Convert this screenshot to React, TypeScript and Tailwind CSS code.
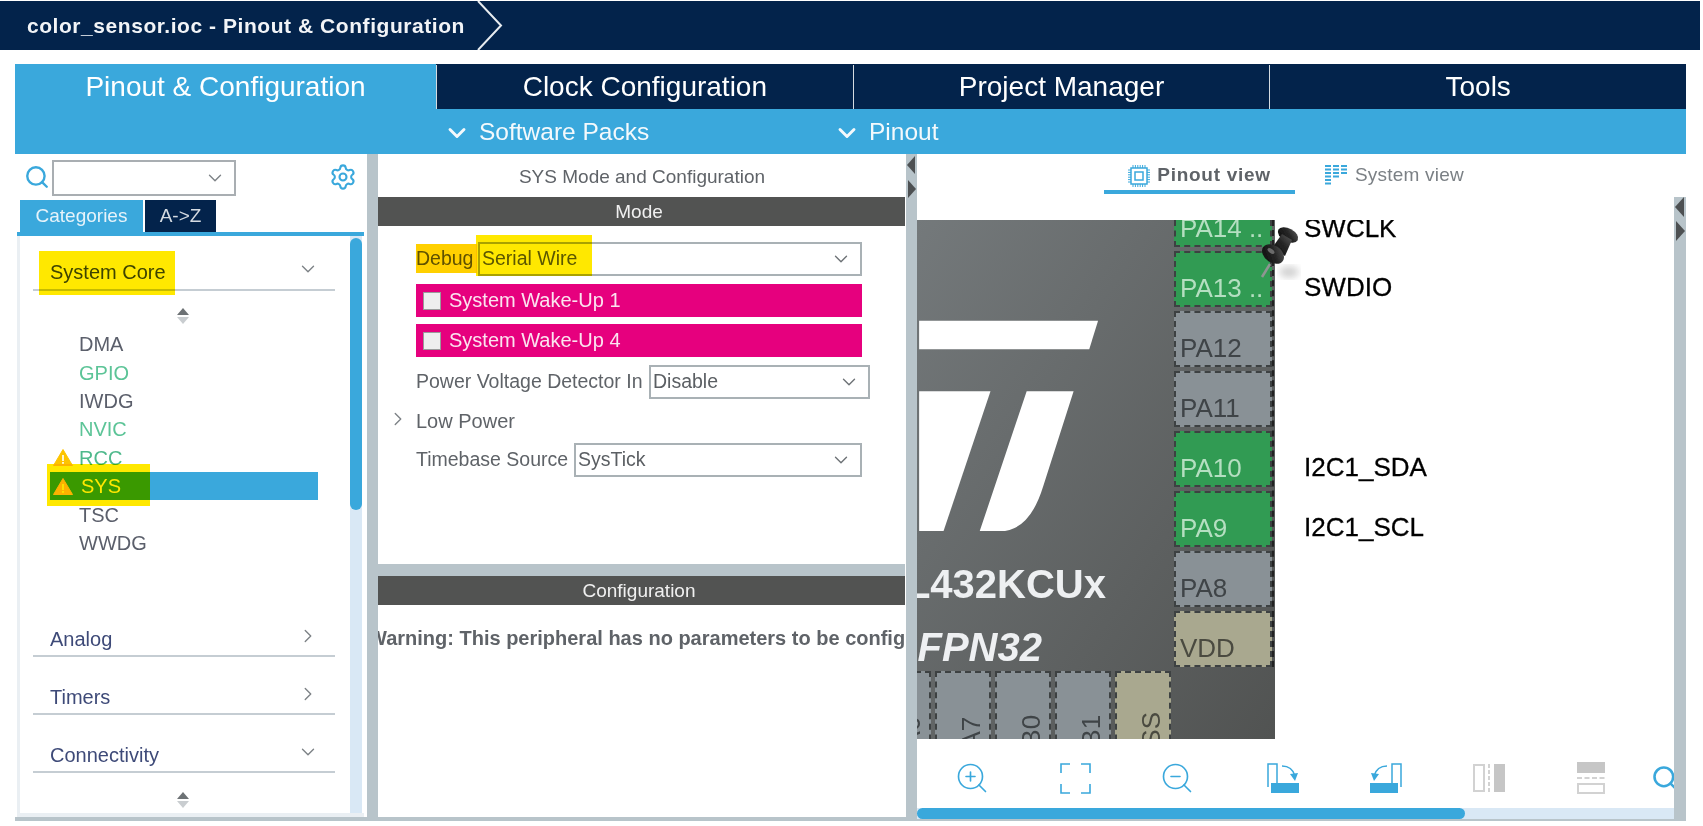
import React from 'react';
import { ChevronDown, ChevronRight, Search, Settings, ZoomIn, ZoomOut } from 'lucide-react';

const TABS = ['Clock Configuration', 'Project Manager', 'Tools'];

const ITEMS = [
  { name: 'DMA', color: 'text-[#5b5f6b]' },
  { name: 'GPIO', color: 'text-[#5cc497]' },
  { name: 'IWDG', color: 'text-[#5b5f6b]' },
  { name: 'NVIC', color: 'text-[#5cc497]' },
  { name: 'RCC', color: 'text-[#4fb98c]', warn: true },
  { name: 'SYS', color: 'text-white ml-[2px]', warn: true, selected: true },
  { name: 'TSC', color: 'text-[#5b5f6b]' },
  { name: 'WWDG', color: 'text-[#5b5f6b]' },
];

const SIDE_PINS = [
  { name: 'PA14 ..', kind: 'green', h: 'h-[27px]' },
  { name: 'PA13 ..', kind: 'green', h: 'h-[56px]' },
  { name: 'PA12', kind: 'gray', h: 'h-[56px]' },
  { name: 'PA11', kind: 'gray', h: 'h-[56px]' },
  { name: 'PA10', kind: 'green', h: 'h-[56px]' },
  { name: 'PA9', kind: 'green', h: 'h-[56px]' },
  { name: 'PA8', kind: 'gray', h: 'h-[56px]' },
  { name: 'VDD', kind: 'power', h: 'h-[56px]' },
];

const pinColors: Record<string, string> = {
  green: 'bg-[#319b53] text-[#b5dfc1]',
  gray: 'bg-[#899196] text-[#3f4447]',
  power: 'bg-[#a9a88f] text-[#4a4a40]',
};

const Stepper = () => (
  <svg width="14" height="18" viewBox="0 0 14 18" className="block">
    <path d="M7 1 L13 8 H1 Z" fill="#6d7275" />
    <path d="M7 17 L13 10 H1 Z" fill="#c9cdd0" />
  </svg>
);

const Warn = () => (
  <svg width="20" height="17" viewBox="0 0 20 17" className="block">
    <path d="M10 0.5 L19.5 16.5 H0.5 Z" fill="#fdc400" stroke="#fdc400" strokeLinejoin="round" />
    <rect x="9.2" y="6" width="1.6" height="6" fill="#fff" />
    <rect x="9.2" y="13" width="1.6" height="1.8" fill="#fff" />
  </svg>
);

const Section = ({ name, open, className }: { name: string; open?: boolean; className: string }) => (
  <div className={`flex items-center justify-between h-[32px] ml-[13px] w-[302px] border-b-2 border-[#c5cdd3] pl-[17px] pr-[18px] ${className}`}>
    <span className="text-[20px] text-[#3e4a78] leading-none">{name}</span>
    {open ? (
      <ChevronDown size={22} strokeWidth={1.5} className="text-[#7d8286] -mr-[2px] mb-[6px]" />
    ) : (
      <ChevronRight size={22} strokeWidth={1.5} className="text-[#7d8286] -mr-[2px] mb-[6px]" />
    )}
  </div>
);

const SelectBox = ({ value, className }: { value: string; className: string }) => (
  <div className={`flex items-center justify-between h-[34px] border-2 border-[#a9b1b5] pl-[2px] pr-[8px] bg-white ${className}`}>
    <span className="text-[19.5px] text-[#5b5f63]">{value}</span>
    <ChevronDown size={22} strokeWidth={1.5} className="text-[#6d7276]" />
  </div>
);

const WakeUp = ({ label }: { label: string }) => (
  <div className="flex items-center h-[33px] w-[446px] ml-[38px] bg-[#e6007e] pl-[7px] gap-[8px]">
    <div className="w-[18px] h-[18px] bg-[#eeeeee] border border-[#9a9a9a]" />
    <span className="text-[20px] text-[#fbe3f0] pb-[2px]">{label}</span>
  </div>
);

const DarkHeader = ({ label }: { label: string }) => (
  <div className="flex items-center justify-center h-[29px] bg-[#525352] text-[19px] text-[#f0f0f0] w-[527px] shrink-0 pr-[5px] pt-[2px]">{label}</div>
);

const ChipIcon = () => (
  <svg width="22" height="22" viewBox="0 0 22 22" className="block" fill="none" stroke="#3aa8dc">
    <rect x="3" y="3" width="16" height="16" strokeWidth="1.5" />
    <rect x="7" y="7" width="8" height="8" strokeWidth="1.5" />
    <path d="M5 0v3M7.4 0v3M9.8 0v3M12.2 0v3M14.6 0v3M17 0v3M5 19v3M7.4 19v3M9.8 19v3M12.2 19v3M14.6 19v3M17 19v3M0 5h3M0 7.4h3M0 9.8h3M0 12.2h3M0 14.6h3M0 17h3M19 5h3M19 7.4h3M19 9.8h3M19 12.2h3M19 14.6h3M19 17h3" strokeWidth="1" />
  </svg>
);

const SystemIcon = () => (
  <svg width="22" height="21" viewBox="0 0 22 21" className="block" fill="#3aa8dc">
    <rect x="0" y="0" width="6" height="2" /><rect x="8" y="0" width="6" height="2" /><rect x="16" y="0" width="6" height="2" />
    <rect x="0" y="3.5" width="6" height="2" /><rect x="8" y="3.5" width="6" height="2" /><rect x="16" y="3.5" width="6" height="2" />
    <rect x="0" y="7" width="6" height="2" /><rect x="8" y="7" width="6" height="2" /><rect x="16" y="7" width="6" height="2" />
    <rect x="0" y="10.5" width="6" height="2" /><rect x="8" y="10.5" width="6" height="2" />
    <rect x="0" y="14" width="6" height="2" />
    <rect x="0" y="17.5" width="6" height="2" />
  </svg>
);

const Toolbar = () => (
  <div className="flex items-center h-[32px] overflow-hidden w-[757px] shrink-0">
    <ZoomIn size={36} strokeWidth={1.1} className="text-[#3aa8dc] ml-[37px] shrink-0" />
    <svg width="31" height="31" viewBox="0 0 31 31" fill="none" stroke="#3aa8dc" strokeWidth="1.6" className="ml-[70px] shrink-0">
      <path d="M1 10V1h9M21 1h9v9M30 21v9h-9M10 30H1v-9" />
    </svg>
    <ZoomOut size={36} strokeWidth={1.1} className="text-[#3aa8dc] ml-[68px] shrink-0" />
    <svg width="32" height="31" viewBox="0 0 32 31" fill="none" className="ml-[72px] shrink-0">
      <path d="M1 24V1h9v19" stroke="#3aa8dc" strokeWidth="1.5" />
      <rect x="4" y="20" width="28" height="10" fill="#3aa8dc" />
      <path d="M15 3c6 0 11 3 13 10" stroke="#3aa8dc" strokeWidth="1.5" />
      <path d="M23 11l8-1-3 8z" fill="#3aa8dc" />
    </svg>
    <svg width="32" height="31" viewBox="0 0 32 31" fill="none" className="ml-[71px] shrink-0">
      <path d="M31 24V1h-9v19" stroke="#3aa8dc" strokeWidth="1.5" />
      <rect x="0" y="20" width="28" height="10" fill="#3aa8dc" />
      <path d="M17 3C11 3 6 6 4 13" stroke="#3aa8dc" strokeWidth="1.5" />
      <path d="M9 11l-8-1 3 8z" fill="#3aa8dc" />
    </svg>
    <svg width="32" height="28" viewBox="0 0 32 28" fill="none" className="ml-[71px] shrink-0">
      <rect x="1" y="1" width="10" height="26" stroke="#d2d2d2" strokeWidth="2" />
      <path d="M16 0v28" stroke="#d2d2d2" strokeWidth="2" strokeDasharray="4 2" />
      <rect x="21" y="0" width="11" height="28" fill="#c6c6c6" />
    </svg>
    <svg width="28" height="32" viewBox="0 0 28 32" fill="none" className="ml-[72px] shrink-0">
      <rect x="0" y="0" width="28" height="11" fill="#c6c6c6" />
      <path d="M0 16h28" stroke="#d2d2d2" strokeWidth="2" strokeDasharray="5 2.5" />
      <rect x="1" y="22" width="26" height="9" stroke="#d2d2d2" strokeWidth="2" />
    </svg>
    <Search size={28} strokeWidth={2.2} className="text-[#3aa8dc] ml-[46px] shrink-0" />
  </div>
);

const Canvas = () => (
  <div className="relative h-[519px] w-[757px] shrink-0 overflow-hidden bg-white font-['Liberation_Sans',sans-serif]">
    {/* chip drawing, free canvas */}
    <div className="absolute left-0 top-0 w-[358px] h-[519px] bg-gradient-to-br from-[#74797b] to-[#515352]" />
    <svg width="190" height="220" viewBox="917 315 190 225" className="absolute left-0 top-[95px]">
      <path d="M917 321H1100L1091 350H917Z" fill="#fff" />
      <path d="M917 393H990L942 536H917Z" fill="#fff" />
      <path d="M1027 393H1075L1044 490Q1030 536 1000 536H979Z" fill="#fff" />
    </svg>
    <div className="absolute right-[568px] top-[344px] text-[40px] leading-none font-bold text-[#eef0f2] whitespace-nowrap">STM32L432KCUx</div>
    <div className="absolute right-[632px] top-[407px] text-[40px] leading-none font-bold italic text-[#eef0f2] whitespace-nowrap">UFQFPN32</div>
    <div className="absolute left-[257px] top-0 w-[100px] flex flex-col gap-[4px] border-r-2 border-dashed border-[#222]">
      {SIDE_PINS.map(pin => (
        <div key={pin.name} className={`${pin.h} flex items-end pl-[4px] border-2 border-dashed border-[#3d4142] ${pinColors[pin.kind]} text-[26px] leading-none pb-[4px] whitespace-nowrap first:border-t-0`}>
          {pin.name}
        </div>
      ))}
    </div>
    <div className="absolute left-[-42px] top-[451px] flex gap-[4px]">
      {[['PA6', 'gray'], ['PA7', 'gray'], ['PB0', 'gray'], ['PB1', 'gray'], ['VSS', 'power']].map(([n, k]) => (
        <div key={n} className={`relative w-[56px] h-[80px] border-2 border-dashed border-[#3d4142] ${pinColors[k]}`}>
          <span className="absolute left-[21px] top-[91px] origin-top-left rotate-90 -scale-100 text-[26px] leading-none whitespace-nowrap">{n}</span>
        </div>
      ))}
    </div>
    <div className="absolute left-[387px] top-[-7px] text-[26px] leading-[30px] text-black [-webkit-text-stroke:0.3px_black]">SWCLK</div>
    <div className="absolute left-[387px] top-[52px] text-[26px] leading-[30px] text-black [-webkit-text-stroke:0.3px_black]">SWDIO</div>
    <div className="absolute left-[387px] top-[232px] text-[26px] leading-[30px] text-black [-webkit-text-stroke:0.3px_black]">I2C1_SDA</div>
    <div className="absolute left-[387px] top-[292px] text-[26px] leading-[30px] text-black [-webkit-text-stroke:0.3px_black]">I2C1_SCL</div>
    {/* push pin */}
    <svg width="50" height="66" viewBox="0 0 50 66" className="absolute left-[342px] top-[2px]">
      <defs>
        <linearGradient id="pin" x1="0" y1="1" x2="1" y2="0">
          <stop offset="0" stopColor="#0c0c0c" />
          <stop offset="0.55" stopColor="#262626" />
          <stop offset="1" stopColor="#5c5c5c" />
        </linearGradient>
        <filter id="soft"><feGaussianBlur stdDeviation="3.5" /></filter>
        <filter id="edge"><feGaussianBlur stdDeviation="0.6" /></filter>
      </defs>
      <ellipse cx="30" cy="50" rx="10" ry="6" fill="#a8a8a8" opacity="0.5" filter="url(#soft)" />
      <g filter="url(#edge)">
        <path d="M11 42L3 55" stroke="#8f9592" strokeWidth="2.5" />
        <ellipse cx="29" cy="13" rx="11" ry="6.5" transform="rotate(28 29 13)" fill="url(#pin)" />
        <path d="M23 12L33 18L26 34L13 26Z" fill="url(#pin)" />
        <ellipse cx="14" cy="32" rx="12" ry="8.5" transform="rotate(35 14 32)" fill="url(#pin)" />
        <ellipse cx="12" cy="29" rx="4" ry="2" transform="rotate(35 12 29)" fill="#6a6a6a" />
      </g>
    </svg>
  </div>
);

export default function App() {
  return (
    <div className="relative w-[1703px] h-[826px] overflow-hidden bg-white font-['Liberation_Sans',sans-serif]">
      {/* breadcrumb */}
      <div className="flex items-center h-[49px] w-[1700px] mt-px bg-[#03234b]">
        <span className="ml-[27px] text-[21px] font-bold tracking-[0.55px] text-[#f2f4f7] whitespace-nowrap">color_sensor.ioc - Pinout &amp; Configuration</span>
        <svg width="26" height="49" viewBox="0 0 26 49" fill="none" stroke="#e8ecf0" strokeWidth="2" className="ml-[12px]">
          <path d="M1 0L24 24.5L1 49" />
        </svg>
      </div>

      <div className="ml-[15px] mt-[14px] w-[1671px]">
        {/* main tabs */}
        <div className="flex h-[45px] pt-[1px] text-[28px] leading-none text-white bg-[#03234b]">
          <div className="flex items-center justify-center w-[421px] -mt-[1px] pt-[1px] bg-[#3aa8dc]">Pinout &amp; Configuration</div>
          {TABS.map((tab, i) => (
            <div key={tab} className={`flex items-center justify-center flex-1 bg-[#03234b] ${i < 2 ? 'border-r border-[#d5dbe0]' : ''} ${i === 0 ? 'border-l border-[#d5dbe0]' : ''}`}>{tab}</div>
          ))}
        </div>
        {/* sub menu */}
        <div className="flex items-center h-[45px] pt-[2px] bg-[#3aa8dc] text-[24.5px] text-[#f4f9fc] pl-[428px]">
          <div className="flex items-center gap-[8px] w-[390px]">
            <ChevronDown size={28} strokeWidth={2.5} />
            <span>Software Packs</span>
          </div>
          <div className="flex items-center gap-[8px]">
            <ChevronDown size={28} strokeWidth={2.5} />
            <span>Pinout</span>
          </div>
        </div>

        {/* panels */}
        <div className="flex h-[667px] border-b-4 border-[#b8c4ca]">
          {/* left */}
          <div className="w-[352px] shrink-0 flex flex-col">
            <div className="flex items-center h-[46px] pt-[2px] pl-[9px]">
              <Search size={26} strokeWidth={2.2} className="text-[#3aa8dc] -mt-[3px]" />
              <div className="flex items-center justify-end w-[184px] h-[36px] ml-[2px] border-2 border-[#a9aeb2] pr-[8px]">
                <ChevronDown size={22} strokeWidth={1.5} className="text-[#7d8286]" />
              </div>
              <Settings size={28} strokeWidth={1.8} className="text-[#3aa8dc] ml-[93px] -mt-[3px]" />
            </div>
            <div className="flex h-[32px] ml-[5px]">
              <div className="flex items-center justify-center w-[123px] pt-[1px] bg-[#3aa8dc] text-[19px] text-[#e6f3fa]">Categories</div>
              <div className="flex items-center justify-center w-[71px] ml-[2px] pt-[1px] bg-[#03234b] text-[19px] text-[#d5dbe2]">A-&gt;Z</div>
            </div>
            <div className="h-[4px] ml-[2px] w-[347px] bg-[#3aa8dc]" />
            <div className="flex flex-1 ml-[2px] w-[347px] border-l-[3px] border-b-[4px] border-[#eaeff3]">
              <div className="w-[330px] shrink-0 flex flex-col">
                <Section name="System Core" open className="mt-[18px] h-[37px]" />
                <div className="flex justify-center mt-[16px] mr-[4px]"><Stepper /></div>
                <div className="flex flex-col mt-[5px]">
                  {ITEMS.map(item => (
                    <div key={item.name} className={`flex items-center h-[28.4px] ml-[30px] w-[268px] ${item.selected ? 'bg-[#3aa8dc]' : ''}`}>
                      <div className="w-[29px] flex justify-start pl-[3px] shrink-0">{item.warn ? <Warn /> : null}</div>
                      <span className={`text-[20px] ${item.color}`}>{item.name}</span>
                    </div>
                  ))}
                </div>
                <Section name="Analog" className="mt-[68px] pb-[3px]" />
                <Section name="Timers" className="mt-[26px] pb-[3px]" />
                <Section name="Connectivity" open className="mt-[26px] pb-[3px]" />
                <div className="flex justify-center mt-[18px] mr-[4px]"><Stepper /></div>
              </div>
              <div className="w-[12px] bg-[#d9e8f5]">
                <div className="h-[272px] mt-[2px] w-[12px] rounded-full bg-[#3aa8dc]" />
              </div>
            </div>
          </div>

          {/* left splitter */}
          <div className="w-[11px] shrink-0 bg-[#b8c4ca]" />

          {/* center */}
          <div className="w-[528px] shrink-0 flex flex-col overflow-hidden">
            <div className="flex items-center justify-center h-[43px] pt-[3px] text-[19px] text-[#5f6368] whitespace-nowrap">SYS Mode and Configuration</div>
            <DarkHeader label="Mode" />
            <div className="flex items-center mt-[16px] ml-[38px] text-[19.5px] text-[#5f6368]">
              <span className="w-[62px]">Debug</span>
              <SelectBox value="Serial Wire" className="w-[384px]" />
            </div>
            <div className="mt-[8px]"><WakeUp label="System Wake-Up 1" /></div>
            <div className="mt-[7px]"><WakeUp label="System Wake-Up 4" /></div>
            <div className="flex items-center mt-[8px] ml-[38px] text-[19.5px] text-[#5f6368]">
              <span className="w-[233px] whitespace-nowrap">Power Voltage Detector In</span>
              <SelectBox value="Disable" className="w-[221px]" />
            </div>
            <div className="flex items-center h-[44px] ml-[7px] text-[20px] text-[#5f6368]">
              <ChevronRight size={22} strokeWidth={1.5} className="text-[#7d8286] -mt-[4px] w-[26px]" />
              <span className="ml-[5px]">Low Power</span>
            </div>
            <div className="flex items-center ml-[38px] text-[19.5px] text-[#5f6368]">
              <span className="w-[158px] whitespace-nowrap">Timebase Source</span>
              <SelectBox value="SysTick" className="w-[288px]" />
            </div>
            <div className="h-[12px] mt-[87px] w-[527px] shrink-0 bg-[#b8c4ca]" />
            <DarkHeader label="Configuration" />
            <div className="flex items-center h-[66px] w-[527px] overflow-hidden">
              <span className="text-[20px] font-bold whitespace-nowrap text-[#5f6368] shrink-0 -ml-[10px]">Warning: This peripheral has no parameters to be configured</span>
            </div>
          </div>

          {/* right splitter */}
          <div className="flex flex-col items-center w-[11px] shrink-0 bg-[#b8c4ca] pt-[2px] gap-[6px]">
            <svg width="9" height="18" viewBox="0 0 9 18"><path d="M8 0V18L0 9Z" fill="#4d5052" /></svg>
            <svg width="9" height="18" viewBox="0 0 9 18"><path d="M1 0V18L9 9Z" fill="#4d5052" /></svg>
          </div>

          {/* right */}
          <div className="w-[757px] shrink-0 flex flex-col">
            <div className="flex h-[40px] pl-[187px]">
              <div className="flex items-center justify-center gap-[7px] w-[191px] h-[40px] border-b-4 border-[#3aa8dc] pt-[7px]">
                <ChipIcon />
                <span className="text-[19px] font-bold tracking-[0.7px] text-[#5f6368] whitespace-nowrap">Pinout view</span>
              </div>
              <div className="flex items-center gap-[8px] ml-[30px] h-[40px] pt-[3px]">
                <SystemIcon />
                <span className="text-[19px] tracking-[0.2px] text-[#7b8085] whitespace-nowrap">System view</span>
              </div>
            </div>
            <div className="mt-[26px]"><Canvas /></div>
            <div className="mt-[23px]"><Toolbar /></div>
            <div className="mt-[14px] h-[11px] w-[757px] bg-[#d9e8f5]">
              <div className="h-[11px] w-[548px] rounded-full bg-[#3aa8dc]" />
            </div>
          </div>

          {/* far right splitter */}
          <div className="flex flex-col items-center w-[12px] shrink-0 mt-[43px] bg-[#b8c4ca] gap-[4px]">
            <svg width="10" height="20" viewBox="0 0 10 20"><path d="M9 0V20L0 10Z" fill="#4d5052" /></svg>
            <svg width="10" height="20" viewBox="0 0 10 20"><path d="M1 0V20L10 10Z" fill="#4d5052" /></svg>
          </div>
        </div>
      </div>

      {/* highlighter marks over the screenshot */}
      <div className="absolute left-[39px] top-[251px] w-[136px] h-[44px] bg-[#ffe800] mix-blend-multiply" />
      <div className="absolute left-[47px] top-[464px] w-[103px] h-[42px] bg-[#ffe800] mix-blend-multiply" />
      <div className="absolute left-[416px] top-[244px] w-[61px] h-[29px] bg-[#ffd000] mix-blend-multiply" />
      <div className="absolute left-[476px] top-[235px] w-[116px] h-[41px] bg-[#ffe800] mix-blend-multiply" />
    </div>
  );
}
